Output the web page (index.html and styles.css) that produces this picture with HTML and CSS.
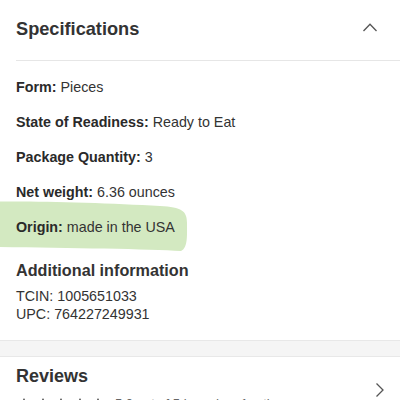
FILE: index.html
```html
<!DOCTYPE html>
<html>
<head>
<meta charset="utf-8">
<link rel="stylesheet" href="styles.css">
</head>
<body>
<section class="specs">
  <header class="specs-head">
    <h2 class="title">Specifications</h2>
    <svg class="chev-up" width="16" height="10" viewBox="0 0 16 10"><path d="M1.5 9 L8 2.2 L14.5 9" fill="none" stroke="#555" stroke-width="1.3"/></svg>
  </header>
  <div class="rows">
    <p class="row"><b>Form:</b> Pieces</p>
    <p class="row"><b>State of Readiness:</b> Ready to Eat</p>
    <p class="row"><b>Package Quantity:</b> 3</p>
    <p class="row"><b>Net weight:</b> 6.36 ounces</p>
    <p class="row hl">
      <svg class="mark" width="190" height="52" viewBox="0 0 190 52"><path d="M0 0.5 C40 0 110 2 160 5 C182 6 187 10 187 22 C187 34 188 47 181 50 C150 48 70 47 0 46 Z" fill="#d3e9c1"/></svg>
      <b>Origin:</b> made in the USA
    </p>
  </div>
  <h3 class="sub">Additional information</h3>
  <p class="ids">TCIN: 1005651033<br>UPC: 764227249931</p>
</section>
<div class="band"></div>
<section class="reviews">
  <div class="rev-main">
    <h2 class="rev-title">Reviews</h2>
    <div class="rating">
      <span class="stars">
        <svg width="14" height="14" viewBox="0 0 24 24"><path d="M12 1.5l3.1 7.1 7.6.6-5.8 5 1.8 7.5L12 17.7l-6.7 4 1.8-7.5-5.8-5 7.6-.6z" fill="#333"/></svg>
        <svg width="14" height="14" viewBox="0 0 24 24"><path d="M12 1.5l3.1 7.1 7.6.6-5.8 5 1.8 7.5L12 17.7l-6.7 4 1.8-7.5-5.8-5 7.6-.6z" fill="#333"/></svg>
        <svg width="14" height="14" viewBox="0 0 24 24"><path d="M12 1.5l3.1 7.1 7.6.6-5.8 5 1.8 7.5L12 17.7l-6.7 4 1.8-7.5-5.8-5 7.6-.6z" fill="#333"/></svg>
        <svg width="14" height="14" viewBox="0 0 24 24"><path d="M12 1.5l3.1 7.1 7.6.6-5.8 5 1.8 7.5L12 17.7l-6.7 4 1.8-7.5-5.8-5 7.6-.6z" fill="#333"/></svg>
        <svg width="14" height="14" viewBox="0 0 24 24"><path d="M12 1.5l3.1 7.1 7.6.6-5.8 5 1.8 7.5L12 17.7l-6.7 4 1.8-7.5-5.8-5 7.6-.6z" fill="#333"/></svg>
      </span>
      <span class="rating-text">5.0 out of 5 based on 1 rating</span>
    </div>
  </div>
  <svg class="chev-right" width="10" height="16" viewBox="0 0 10 16"><path d="M1.5 1.5 L8 8 L1.5 14.5" fill="none" stroke="#555" stroke-width="1.3"/></svg>
</section>
</body>
</html>
```
FILE: styles.css
```css
html, body {
  margin: 0;
  padding: 0;
  background: #fff;
  overflow: hidden;
}
body {
  font-family: "Liberation Sans", Arial, Helvetica, sans-serif;
  color: #333;
  width: 400px;
  height: 400px;
}
.specs-head {
  margin-left: 16px;
  padding: 17px 22px 0 0;
  height: 43px;
  border-bottom: 1px solid #e6e6e6;
  display: flex;
  justify-content: space-between;
  align-items: flex-start;
}
.title {
  margin: 0;
  font-size: 18.2px;
  line-height: 24px;
  font-weight: bold;
  color: #333;
}
.chev-up {
  margin-top: 5px;
}
.specs {
  padding-bottom: 17px;
}
.rows {
  padding: 16px 16px 0;
  display: flex;
  flex-direction: column;
  gap: 15px;
}
.row {
  margin: 0;
  font-size: 14.3px;
  line-height: 20px;
  color: #333;
}
.row b {
  color: #2a2a2a;
}
.hl {
  position: relative;
  isolation: isolate;
}
.mark {
  position: absolute;
  left: -16px;
  top: -16px;
  z-index: -1;
}
.sub {
  margin: 22px 16px 0;
  font-size: 16.2px;
  line-height: 22px;
  font-weight: bold;
  color: #333;
}
.ids {
  margin: 7px 16px 0;
  font-size: 14.3px;
  line-height: 17.5px;
  color: #333;
}
.band {
  height: 15px;
  background: #f5f5f5;
  border-top: 1px solid #e8e8e8;
  border-bottom: 1px solid #e8e8e8;
}
.reviews {
  display: flex;
  justify-content: space-between;
  align-items: flex-start;
  padding: 8px 15px 0 16px;
}
.rev-title {
  margin: 0;
  font-size: 18px;
  line-height: 22px;
  font-weight: bold;
  color: #333;
}
.rating {
  margin-top: 10px;
  display: flex;
  align-items: flex-start;
  gap: 10px;
}
.stars {
  display: flex;
  gap: 4.5px;
  margin-left: 1px;
}
.rating-text {
  font-size: 13px;
  line-height: 14px;
  color: #666;
}
.chev-right {
  margin-top: 17px;
}
```
